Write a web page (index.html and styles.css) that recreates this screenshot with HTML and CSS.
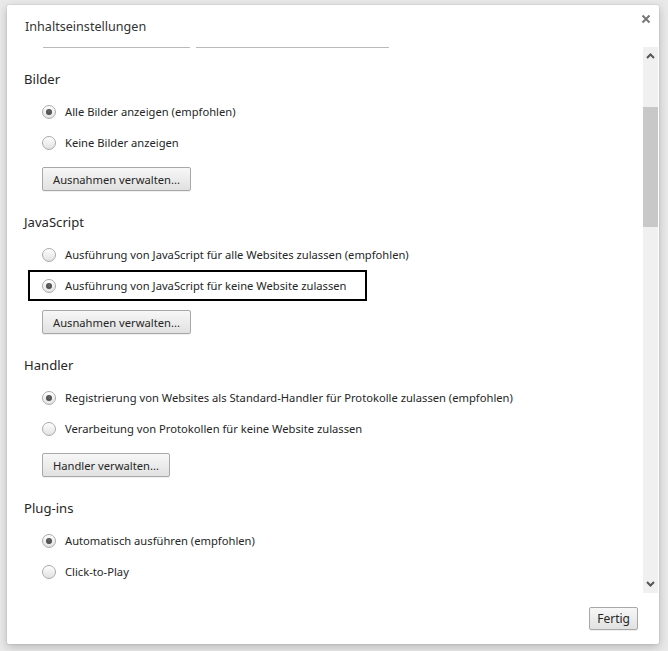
FILE: index.html
```html
<!DOCTYPE html>
<html lang="de">
<head>
<meta charset="utf-8">
<title>Inhaltseinstellungen</title>
<link rel="stylesheet" href="styles.css">
</head>
<body>
<div class="dialog">
  <div class="header">
    <h1 class="title">Inhaltseinstellungen</h1>
    <span class="close" aria-label="Schließen">
      <svg width="10" height="10" viewBox="0 0 10 10"><path d="M1.5 1.5 L8.5 8.5 M8.5 1.5 L1.5 8.5" stroke="#777" stroke-width="2" fill="none"/></svg>
    </span>
  </div>
  <div class="main">
    <div class="content">
      <div class="inputs"><span class="line l1"></span><span class="line l2"></span></div>

      <section class="section first">
        <h2 class="heading">Bilder</h2>
        <label class="option"><span class="radio checked"></span><span>Alle Bilder anzeigen (empfohlen)</span></label>
        <label class="option"><span class="radio"></span><span>Keine Bilder anzeigen</span></label>
        <button class="btn">Ausnahmen verwalten...</button>
      </section>

      <section class="section">
        <h2 class="heading">JavaScript</h2>
        <label class="option"><span class="radio"></span><span>Ausführung von JavaScript für alle Websites zulassen (empfohlen)</span></label>
        <label class="option highlight"><span class="radio checked"></span><span>Ausführung von JavaScript für keine Website zulassen</span></label>
        <button class="btn">Ausnahmen verwalten...</button>
      </section>

      <section class="section">
        <h2 class="heading">Handler</h2>
        <label class="option"><span class="radio checked"></span><span>Registrierung von Websites als Standard-Handler für Protokolle zulassen (empfohlen)</span></label>
        <label class="option"><span class="radio"></span><span>Verarbeitung von Protokollen für keine Website zulassen</span></label>
        <button class="btn">Handler verwalten...</button>
      </section>

      <section class="section">
        <h2 class="heading">Plug-ins</h2>
        <label class="option"><span class="radio checked"></span><span>Automatisch ausführen (empfohlen)</span></label>
        <label class="option"><span class="radio"></span><span>Click-to-Play</span></label>
      </section>
    </div>
    <div class="scrollbar">
      <div class="arrow">
        <svg width="9" height="6" viewBox="0 0 9 6"><path d="M1 5 L4.5 1.5 L8 5" stroke="#555" stroke-width="2" fill="none"/></svg>
      </div>
      <div class="track">
        <div class="thumb"></div>
      </div>
      <div class="arrow">
        <svg width="9" height="6" viewBox="0 0 9 6"><path d="M1 1 L4.5 4.5 L8 1" stroke="#555" stroke-width="2" fill="none"/></svg>
      </div>
    </div>
  </div>
  <div class="footer">
    <button class="btn done">Fertig</button>
  </div>
</div>
</body>
</html>
```

FILE: styles.css
```css
html, body {
  margin: 0;
  padding: 0;
}
body {
  width: 668px;
  height: 651px;
  overflow: hidden;
  background: #e9e9e9;
  font-family: "Segoe UI", "Noto Sans", "Open Sans", sans-serif;
  font-size: 11.2px;
  color: #262626;
}
.dialog {
  margin: 5px 0 0 7px;
  width: 652px;
  height: 639px;
  background: #fff;
  border-radius: 2px;
  box-shadow: 0 3px 10px rgba(0, 0, 0, 0.22), 0 0 0 1px rgba(0, 0, 0, 0.04);
  display: flex;
  flex-direction: column;
  overflow: hidden;
}
.header {
  height: 41px;
  flex: none;
  display: flex;
  justify-content: space-between;
  align-items: flex-start;
  padding-left: 18px;
}
.title {
  margin: 12px 0 0;
  font-size: 12.6px;
  line-height: 20px;
  font-weight: normal;
  color: #333;
}
.close {
  margin: 9px 8px 0 0;
  width: 10px;
  height: 10px;
  display: flex;
}
.main {
  flex: none;
  height: 547px;
  display: flex;
}
.content {
  flex: 1;
  overflow: hidden;
  padding-left: 17px;
}
.inputs {
  display: flex;
  gap: 6px;
  margin: 1px 0 0 19px;
  height: 1px;
}
.line {
  height: 1px;
  background: #b9b9b9;
}
.l1 { width: 147px; }
.l2 { width: 193px; }
.section {
  margin-bottom: 21px;
}
.section.first {
  margin-top: 21px;
}
.heading {
  margin: 0 0 7px;
  font-size: 13.1px;
  line-height: 20px;
  font-weight: normal;
  color: #262626;
}
.option {
  display: flex;
  align-items: center;
  gap: 9px;
  height: 31px;
  width: max-content;
  box-sizing: border-box;
  margin-left: 4px;
  padding-left: 14px;
}
.option.highlight {
  width: 339px;
  outline: 2px solid #000;
  outline-offset: -2px;
}
.radio {
  width: 12px;
  height: 12px;
  border-radius: 50%;
  border: 1px solid #aaa;
  background: linear-gradient(#fdfdfd, #e2e2e2);
  box-shadow: inset 0 1px 1px rgba(255, 255, 255, 0.8);
  position: relative;
  flex: none;
}
.radio.checked::after {
  content: "";
  position: absolute;
  left: 3px;
  top: 3px;
  width: 6px;
  height: 6px;
  border-radius: 50%;
  background: radial-gradient(circle at 50% 40%, #666, #3c3c3c);
}
.btn {
  display: block;
  height: 24px;
  margin: 9px 0 0 18px;
  padding: 0 10px;
  border: 1px solid #a8a8a8;
  border-radius: 2px;
  background: linear-gradient(#f7f7f7, #e1e1e1);
  font-family: inherit;
  font-size: 11.2px;
  color: #262626;
  box-shadow: 0 1px 0 rgba(0, 0, 0, 0.06);
}
.scrollbar {
  width: 15px;
  margin: 1px 1px 0 0;
  display: flex;
  flex-direction: column;
  background: #f0f0f0;
}
.arrow {
  height: 18px;
  display: flex;
  align-items: center;
  justify-content: center;
  flex: none;
}
.track {
  flex: 1;
  padding-top: 42px;
}
.thumb {
  height: 120px;
  background: #c8c8c8;
}
.footer {
  flex: 1;
  display: flex;
  justify-content: flex-end;
  align-items: flex-start;
  padding: 14px 21px 0 0;
}
.btn.done {
  margin: 0;
  height: 23px;
  padding: 0 7px;
  font-size: 12px;
}
```
